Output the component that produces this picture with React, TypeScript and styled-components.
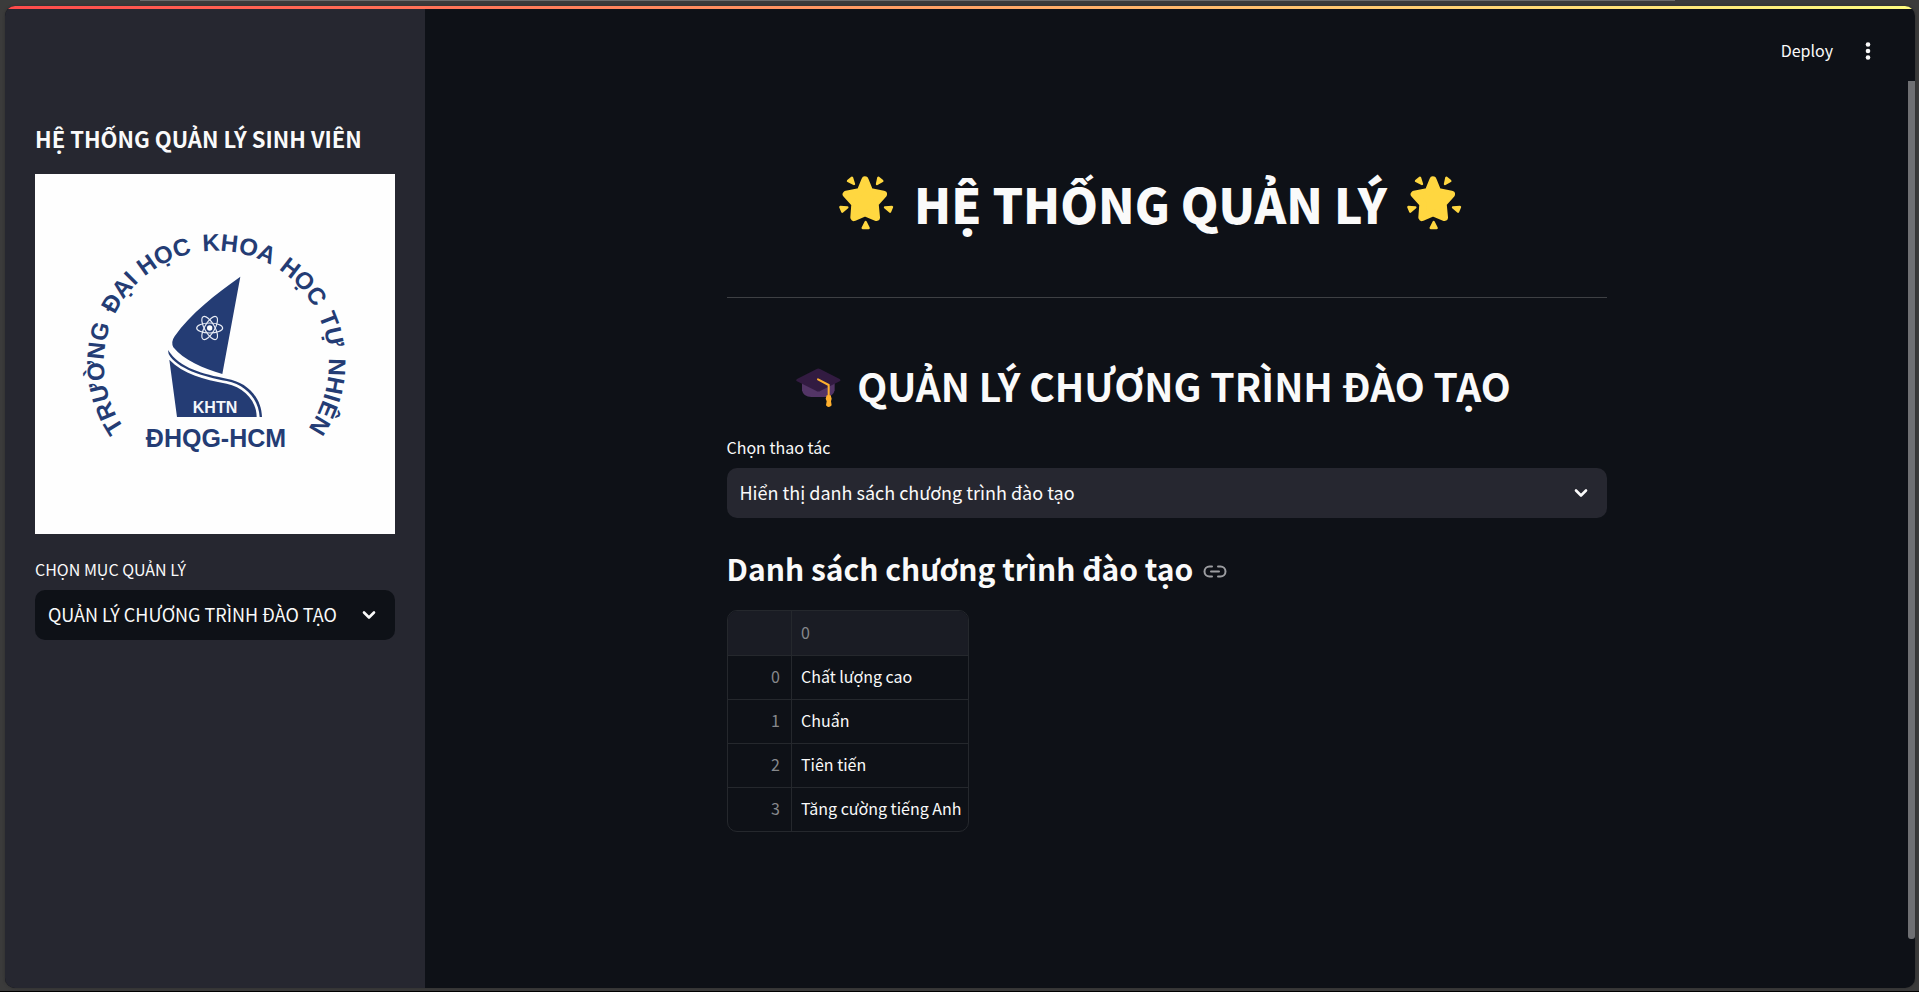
import React from "react";
import styled, { createGlobalStyle } from "styled-components";

const GlobalStyle = createGlobalStyle`
  *, *::before, *::after { box-sizing: border-box; }
  body {
    margin: 0;
    background: #3b3b3b;
    color: #fafafa;
    font-family: "Noto Sans CJK SC", "Noto Sans", sans-serif;
    font-size: 16px;
    line-height: 24px;
  }
  h1, h2, h3, p { margin: 0; }
`;

const Frame = styled.div`
  display: flex;
  flex-direction: column;
  min-height: 100vh;
  border-bottom: 1px solid #000;
`;

const BrowserEdge = styled.div`
  height: 1px;
  margin: 0 244px 5px 140px;
  background: #6b6b6b;
`;

const AppWindow = styled.div`
  flex: 1;
  display: flex;
  flex-direction: column;
  margin: 0 4px 3px 5px;
  border-radius: 10px;
  overflow: hidden;
  background: #0e1117;
  box-shadow: 0 0 3px #2c2c2c;
`;

const Decoration = styled.div`
  height: 3px;
  background: linear-gradient(90deg, #ff4b4b, #fffd80);
`;

const Columns = styled.div`
  flex: 1;
  display: flex;
`;

const Sidebar = styled.aside`
  width: 420px;
  flex-shrink: 0;
  padding: 111px 30px 30px;
  background: #262730;
`;

const SidebarTitle = styled.h3`
  font-size: 22px;
  line-height: 36px;
  font-weight: 700;
  margin-bottom: 18px;
  white-space: nowrap;
`;

const Logo = styled.svg`
  display: block;
  width: 100%;
  background: #fefefe;
  margin-bottom: 23px;
`;

const Main = styled.main`
  flex: 1;
  display: flex;
  flex-direction: column;
  min-width: 0;
`;

const Toolbar = styled.header`
  height: 72px;
  flex-shrink: 0;
  display: flex;
  align-items: center;
  justify-content: flex-end;
  gap: 22px;
  padding: 12px 34px 0 0;
`;

const ToolbarButton = styled.button`
  display: flex;
  align-items: center;
  padding: 0 0 2px;
  border: 0;
  background: none;
  color: inherit;
  font: inherit;
  cursor: pointer;
`;

const Scroller = styled.div`
  flex: 1;
  display: flex;
`;

const Page = styled.div`
  flex: 1;
  min-width: 0;
  display: flex;
  justify-content: center;
`;

const Content = styled.div`
  width: 100%;
  max-width: 880px;
  padding-top: 82px;
`;

const ScrollTrack = styled.div`
  width: 7px;
  padding-bottom: 49px;
  display: flex;
`;

const ScrollThumb = styled.div`
  flex: 1;
  background: #6f7073;
  border-radius: 0 0 3px 3px;
`;

const PageTitle = styled.h1`
  display: flex;
  align-items: center;
  justify-content: center;
  gap: 20px;
  padding-right: 32px;
  font-size: 48px;
  line-height: 80px;
  font-weight: 900;
  white-space: nowrap;
`;

const Divider = styled.hr`
  height: 1px;
  margin: 54px 0 51px;
  border: 0;
  background: #3e4044;
`;

const SectionTitle = styled.h2`
  display: flex;
  align-items: center;
  justify-content: center;
  gap: 16px;
  padding-right: 26px;
  font-size: 39px;
  line-height: 72px;
  font-weight: 700;
  margin-bottom: 14px;
  white-space: nowrap;
`;

const Field = styled.div`
  display: flex;
  flex-direction: column;
  gap: 9px;
`;

const Label = styled.label``;

const SelectBox = styled.div<{ $fill: string }>`
  display: flex;
  align-items: center;
  height: 50px;
  border-radius: 10px;
  background: ${(p) => p.$fill};
  position: relative;

  svg {
    position: absolute;
    right: 18px;
    pointer-events: none;
  }
`;

const Select = styled.select`
  appearance: none;
  width: 100%;
  height: 100%;
  padding: 0 48px 2px 13px;
  border: 0;
  border-radius: 10px;
  background: none;
  color: inherit;
  font: inherit;
  font-size: 18px;
`;

const ListTitle = styled.h3`
  display: flex;
  align-items: center;
  gap: 10px;
  margin: 29px 0 21px;
  font-size: 30px;
  line-height: 42px;
  font-weight: 700;
`;

const AnchorLink = styled.a`
  display: flex;
  color: #9c9da1;
`;

const TableCard = styled.div`
  width: 242px;
  border: 1px solid #25282d;
  border-radius: 10px;
  overflow: hidden;
`;

const Table = styled.table`
  width: 100%;
  border-collapse: collapse;
  table-layout: fixed;

  tr { height: 44px; }
  tbody tr { border-top: 1px solid #25282d; }
  thead { background: #1a1c24; }
`;

const IndexCell = styled.th`
  width: 64px;
  padding: 0 11px 2px;
  border-right: 1px solid #25282d;
  color: #86888c;
  font-weight: 400;
  text-align: right;
`;

const HeadCell = styled.th`
  padding: 0 9px 2px;
  color: #86888c;
  font-weight: 400;
  text-align: left;
`;

const Cell = styled.td`
  padding: 0 9px 2px;
  white-space: nowrap;
`;

const Chevron = () => (
  <svg width="16" height="16" viewBox="0 0 16 16" fill="none" stroke="#fafafa" strokeWidth="2.6" strokeLinecap="round" strokeLinejoin="round" aria-hidden="true">
    <path d="M3 5.500 8 10.500 13 5.500" />
  </svg>
);

const GlowingStar = () => (
  <svg width="55" height="54" viewBox="0 0 165 162" fill="#ffd740" stroke="#ffd740" strokeLinejoin="round" aria-hidden="true">
    <path strokeWidth="22" d="M78 12 92 47 133 55 108 83 112 124 78 110 45 124 48 83 22 55 64 47Z" />
    <g strokeWidth="7">
      <path d="M27 15 39 5 45 24Z" />
      <path d="M130 15 118 5 114 24Z" />
      <path d="M4 93 25 94 10 107Z" />
      <path d="M159 93 138 94 153 107Z" />
      <path d="M80 138 89 156 71 156Z" />
    </g>
  </svg>
);

const GraduationCap = () => (
  <svg width="45" height="46" viewBox="0 -18 135 138" aria-hidden="true">
    <path fill="#533566" d="M18 45V67Q22 87 46 87H88Q112 87 116 67V45Z" />
    <path fill="#321b41" d="M62 3Q67 0 72 3L131 33Q136 37 131 40L74 68Q67 73 60 68L3 40Q-2 37 3 33Z" />
    <path fill="none" stroke="#ffb02e" strokeWidth="6" strokeLinecap="round" strokeLinejoin="round" d="M66 34 98 51V84" />
    <path fill="#ffb02e" d="M92 82H104L107 92 105 100 107 112Q103 117 98 117T90 112L92 100 89 92Z" />
  </svg>
);

const LinkIcon = () => (
  <svg width="24" height="30" viewBox="0 -6 24 30" fill="none" stroke="currentColor" strokeWidth="2" strokeLinecap="round" aria-hidden="true">
    <path d="M9 7.500H6.500a5 5 0 0 0 0 10H9M15 7.500h2.500a5 5 0 0 1 0 10H15M8 12.500h8" />
  </svg>
);

const ringWords = [
  { text: "TRƯỜNG", offset: 1 },
  { text: "ĐẠI", offset: 120 },
  { text: "HỌC", offset: 169 },
  { text: "KHOA", offset: 233 },
  { text: "HỌC", offset: 312 },
  { text: "TỰ", offset: 374 },
  { text: "NHIÊN", offset: 418 },
];

const UniversityLogo = () => (
  <Logo viewBox="0 0 360 360" role="img" aria-label="Trường Đại học Khoa học Tự nhiên" fontFamily="'Liberation Sans', Arial, sans-serif" fontWeight="700" fill="#243c74">
    <path id="ring" fill="none" d="M90 255A112.500 112.500 0 1 1 268 261" />
    {ringWords.map((word) => (
      <text key={word.offset} fontSize="24">
        <textPath href="#ring" startOffset={word.offset}>{word.text}</textPath>
      </text>
    ))}
    <g transform="scale(.33333) translate(-15 -12)">
      <path d="M631 320 577 612C520 596 460 570 430 532Q422 516 434 499C480 432 560 370 631 320Z" />
      <path d="M414 540C450 596 520 612 590 626C650 636 694 680 696 741H689C686 690 650 645 590 633C520 620 440 596 416 552Z" />
      <path d="M418 569C460 612 520 628 590 641C640 652 680 690 680 741H441Z" />
      <g fill="none" stroke="#e8ecf5" strokeWidth="3.500">
        {[30, 90, 150].map((angle) => (
          <ellipse key={angle} cx="539" cy="474" rx="39" ry="15" transform={`rotate(${angle - 30} 539 474)`} />
        ))}
      </g>
      <circle cx="539" cy="474" r="8" fill="#fff" />
    </g>
    <text x="180" y="239" fontSize="16" fill="#f4f6fb" textAnchor="middle">KHTN</text>
    <text x="181" y="273" fontSize="25" textAnchor="middle">ĐHQG-HCM</text>
  </Logo>
);

const programs = ["Chất lượng cao", "Chuẩn", "Tiên tiến", "Tăng cường tiếng Anh"];

export default function App() {
  return (
    <Frame>
      <GlobalStyle />
      <BrowserEdge />
      <AppWindow>
        <Decoration />
        <Columns>
          <Sidebar>
            <SidebarTitle>HỆ THỐNG QUẢN LÝ SINH VIÊN</SidebarTitle>
            <UniversityLogo />
            <Field>
              <Label htmlFor="section">CHỌN MỤC QUẢN LÝ</Label>
              <SelectBox $fill="#0e1117">
                <Select id="section">
                  <option>QUẢN LÝ CHƯƠNG TRÌNH ĐÀO TẠO</option>
                </Select>
                <Chevron />
              </SelectBox>
            </Field>
          </Sidebar>
          <Main>
            <Toolbar>
              <ToolbarButton>Deploy</ToolbarButton>
              <ToolbarButton aria-label="Menu">
                <svg width="26" height="28" viewBox="0 -2 26 28" fill="#fafafa" aria-hidden="true">
                  <circle cx="13" cy="6.500" r="2.300" />
                  <circle cx="13" cy="13" r="2.300" />
                  <circle cx="13" cy="19.500" r="2.300" />
                </svg>
              </ToolbarButton>
            </Toolbar>
            <Scroller>
              <Page>
                <Content>
                  <PageTitle>
                    <GlowingStar />
                    <span>HỆ THỐNG QUẢN LÝ</span>
                    <GlowingStar />
                  </PageTitle>
                  <Divider />
                  <SectionTitle>
                    <GraduationCap />
                    <span>QUẢN LÝ CHƯƠNG TRÌNH ĐÀO TẠO</span>
                  </SectionTitle>
                  <Field>
                    <Label htmlFor="action">Chọn thao tác</Label>
                    <SelectBox $fill="#262730">
                      <Select id="action">
                        <option>Hiển thị danh sách chương trình đào tạo</option>
                      </Select>
                      <Chevron />
                    </SelectBox>
                  </Field>
                  <ListTitle id="programs">
                    Danh sách chương trình đào tạo
                    <AnchorLink href="#programs" aria-label="Link to heading">
                      <LinkIcon />
                    </AnchorLink>
                  </ListTitle>
                  <TableCard>
                    <Table>
                      <thead>
                        <tr>
                          <IndexCell />
                          <HeadCell scope="col">0</HeadCell>
                        </tr>
                      </thead>
                      <tbody>
                        {programs.map((name, i) => (
                          <tr key={name}>
                            <IndexCell scope="row">{i}</IndexCell>
                            <Cell>{name}</Cell>
                          </tr>
                        ))}
                      </tbody>
                    </Table>
                  </TableCard>
                </Content>
              </Page>
              <ScrollTrack>
                <ScrollThumb />
              </ScrollTrack>
            </Scroller>
          </Main>
        </Columns>
      </AppWindow>
    </Frame>
  );
}
